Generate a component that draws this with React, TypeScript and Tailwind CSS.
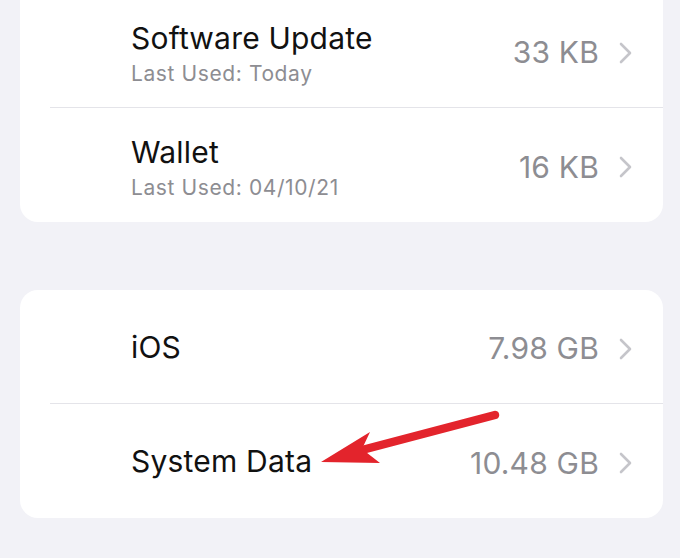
type Row = {
  title: string
  subtitle?: string
  value: string
}

const apps: Row[] = [
  { title: "Software Update", subtitle: "Last Used: Today", value: "33 KB" },
  { title: "Wallet", subtitle: "Last Used: 04/10/21", value: "16 KB" },
]

const system: Row[] = [
  { title: "iOS", value: "7.98 GB" },
  { title: "System Data", value: "10.48 GB" },
]

function Chevron() {
  return (
    <svg width={14} height={22} viewBox="0 0 14 22" className="ml-[20px]">
      <polyline
        points="2,2 11,11 2,20"
        fill="none"
        stroke="#c5c5ca"
        strokeWidth={2.6}
        strokeLinecap="round"
        strokeLinejoin="round"
      />
    </svg>
  )
}

function StorageRow({ row, last }: { row: Row; last: boolean }) {
  return (
    <div className="flex h-[114px] pl-[30px]">
      <div
        className={`flex flex-1 items-center pr-[30px] ${
          last ? "" : "border-b border-[#e4e4e9]"
        }`}
      >
        {/* left side */}
        <div className={`flex flex-1 flex-col pl-[81px] ${row.subtitle ? "pt-[6px]" : ""}`}>
          <div className="text-[30px] leading-[34px] tracking-[0.2px] text-[#111]">
            {row.title}
          </div>
          {row.subtitle && (
            <div className="mt-[6px] text-[21px] leading-[26px] tracking-[0.6px] text-[#8d8d92]">
              {row.subtitle}
            </div>
          )}
        </div>

        {/* value + chevron */}
        <div className="mt-[4px] flex items-center">
          <span className="text-[30px] tracking-[0.2px] text-[#8d8d92]">{row.value}</span>
          <Chevron />
        </div>
      </div>
    </div>
  )
}

function Card({ rows, className }: { rows: Row[]; className?: string }) {
  return (
    <div className={`ml-[20px] mr-[17px] rounded-[18px] bg-white ${className ?? ""}`}>
      {rows.map((r, i) => (
        <StorageRow key={r.title} row={r} last={i === rows.length - 1} />
      ))}
    </div>
  )
}

export default function App() {
  return (
    <div
      className="relative h-[558px] w-[680px] overflow-hidden bg-[#f2f2f7]"
      style={{ fontFamily: "Inter, 'Liberation Sans', sans-serif" }}
    >
      <Card rows={apps} className="-mt-[6px] rounded-t-none" />
      <Card rows={system} className="mt-[68px]" />

      {/* red annotation arrow */}
      <svg
        className="pointer-events-none absolute left-0 top-0"
        width={680}
        height={558}
        viewBox="0 0 680 558"
      >
        <line
          x1={495}
          y1={415}
          x2={362}
          y2={450}
          stroke="#e3242c"
          strokeWidth={8.5}
          strokeLinecap="round"
        />
        <polygon points="321,462 370,432 362,449 380,463" fill="#e3242c" />
      </svg>
    </div>
  )
}
